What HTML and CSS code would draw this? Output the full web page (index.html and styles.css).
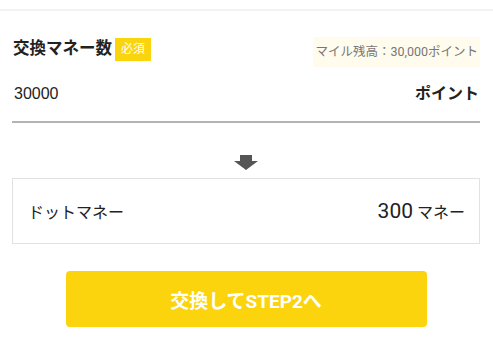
FILE: index.html
```html
<!DOCTYPE html>
<html lang="ja">
<head>
<meta charset="UTF-8">
<meta name="viewport" content="width=device-width, initial-scale=1.0">
<title>交換マネー数</title>
<link rel="stylesheet" href="styles.css">
</head>
<body>
<div class="topline"></div>
<div class="wrap">
    <div class="head">
        <div class="ttl">
            <span class="label">交換マネー数</span>
            <span class="must">必須</span>
        </div>
        <p class="balance">マイル残高：30,000ポイント</p>
    </div>
    <div class="inputrow">
        <input class="num" type="text" value="30000">
        <span class="unit">ポイント</span>
    </div>
    <div class="arrow">
        <svg width="24" height="15" viewBox="0 0 24 15">
            <path d="M6 0H18V6H24L12 15L0 6H6Z" fill="#555"/>
        </svg>
    </div>
    <div class="result">
        <span class="name">ドットマネー</span>
        <span class="val"><b>300</b> マネー</span>
    </div>
    <div class="btnbox">
        <button class="btn">交換してSTEP2へ</button>
    </div>
</div>
</body>
</html>
```

FILE: styles.css
```css
*{margin: 0; padding: 0; box-sizing: border-box;}
body{
    font-family: Roboto, "Noto Sans CJK JP", sans-serif;
    color: #222;
    background: #fff;
}
.topline{
    height: 11px;
    border-bottom: 2px solid #f3f3f3;
}
.wrap{
    padding: 0 13px 0 12px;
}
.head{
    display: flex;
    justify-content: space-between;
    align-items: flex-start;
    padding-top: 26px;
}
.ttl{
    display: flex;
    align-items: flex-start;
    padding-top: 1px;
}
.label{
    font-family: "Noto Sans CJK JP", sans-serif;
    font-size: 16.5px;
    font-weight: bold;
    line-height: 19px;
    padding-left: 1px;
}
.must{
    margin-left: 3px;
    width: 36px;
    height: 23px;
    line-height: 23px;
    text-align: center;
    font-size: 12px;
    color: #fff;
    background: #fad40c;
}
.balance{
    height: 30px;
    line-height: 30px;
    padding: 0 2px;
    font-size: 12.5px;
    color: #777;
    background: #fffcee;
}
.inputrow{
    display: flex;
    justify-content: space-between;
    align-items: center;
    height: 56px;
    border-bottom: 2px solid #b3b3b3;
}
.num{
    border: none;
    outline: none;
    width: 200px;
    padding-left: 2px;
    font-family: "Liberation Sans", sans-serif;
    font-size: 16px;
    color: #222;
    background: transparent;
}
.unit{
    font-family: "Noto Sans CJK JP", sans-serif;
    font-size: 16px;
    font-weight: bold;
    padding: 0 1px 4px 0;
}
.arrow{
    display: flex;
    justify-content: center;
    padding: 32px 0 8px;
}
.arrow svg{
    display: block;
}
.result{
    display: flex;
    justify-content: space-between;
    align-items: center;
    height: 66px;
    border: 1px solid #e2e2e2;
    padding: 0 14px 0 15px;
}
.name{
    font-family: "Noto Sans CJK JP", sans-serif;
    font-size: 16px;
}
.val{
    font-size: 16px;
}
.val b{
    font-size: 21px;
    font-weight: normal;
}
.btnbox{
    display: flex;
    justify-content: center;
    padding-top: 27px;
}
.btn{
    width: 361px;
    height: 56px;
    border: none;
    border-radius: 4px;
    background: #fbd40e;
    color: #fff;
    font-family: Roboto, "Noto Sans CJK JP", sans-serif;
    font-size: 19px;
    font-weight: bold;
    cursor: pointer;
}
```
